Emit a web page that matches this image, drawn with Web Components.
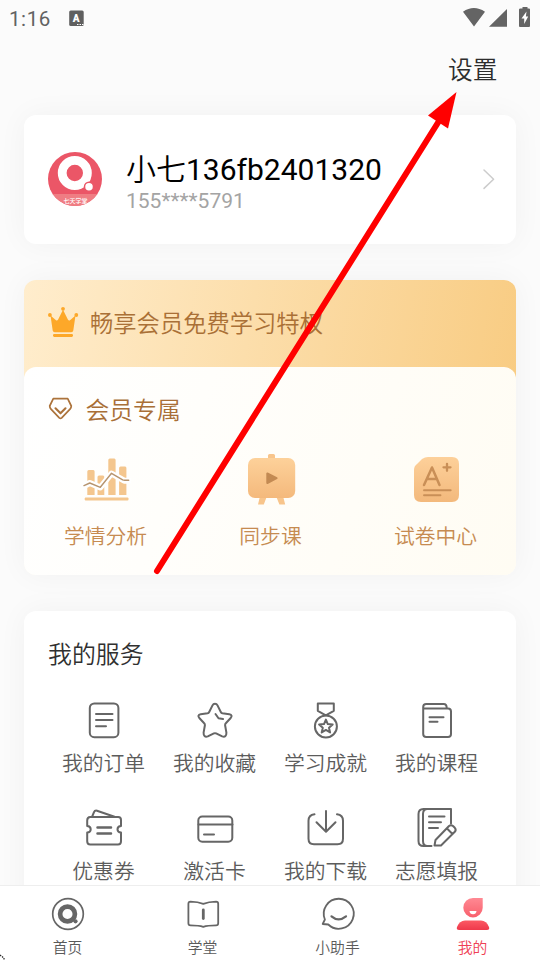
<!DOCTYPE html>
<html lang="zh-CN">
<head>
<meta charset="utf-8">
<title>我的</title>
<style>
html,body{margin:0;height:960px;overflow:hidden}
body{background:#fbfbfb;font-family:"Noto Sans CJK SC",sans-serif;font-weight:350}
</style>
</head>
<body>
<app-screen></app-screen>
<script>
const G = '#666';
const icons = {
  order: ['83.5 700 40 40', `<rect x="89.3" y="703.4" width="28.6" height="33.8" rx="4.5"/><path d="M95.5 714h16.5M95.5 720h16.5M95.5 726.3h10"/>`],
  star: ['194.5 700 40 40', `<path d="M214.5 703.8q1.7 0 2.5 1.6l3.3 6.6q.5 1 1.6 1.2l6.9 1q3.7.9 1.4 3.8l-4.9 5.3q-.8.8-.7 2l1.3 7.3q.2 5-4.2 3.8l-6.1-3q-1.1-.5-2.2 0l-6.1 3q-4.4 1.200-4.200-3.800l1.300-7.300q.1-1.200-.7-2l-4.900-5.300q-2.300-2.900 1.400-3.800l6.900-1q1.100-.2 1.600-1.200l3.300-6.600q.8-1.600 2.500-1.600z"/><path d="M215 714l3 4.300 4.500.7"/>`],
  medal: ['305.500 700 40 40', `<path d="M317.300 703.500h16v7.300l-8 4.500-8-4.500z"/><circle cx="325.400" cy="726.500" r="11"/><path stroke-width="2" d="M325.400 719.600l1.900 4.500 4.900.4-3.700 3.200 1.100 4.800-4.200-2.600-4.200 2.600 1.100-4.800-3.700-3.200 4.900-.4z"/>`],
  course: ['416.500 700 40 40', `<path d="M422.700 708.500h24.800q3 0 3 3v22.500q0 3-3 3h-21.800q-3 0-3-3v-27q0-3 3-3h17.500q3 0 3 4"/><path d="M429 717.300h14M429 721.800h8"/>`],
  coupon: ['83.5 808 40 40', `<path d="M89.700 817h28q2.800 0 2.800 3v6q-3.500.2-3.500 3.300t3.500 3.300v8.600q0 3.200-3 3.200h-27.800q-3 0-3-3.200v-8.600q3.500-.2 3.500-3.300t-3.500-3.300v-5.500q0-3.500 3-3.500zM91.500 817l2-4.800q.8-2 3-1.500l17.500 6"/><path d="M97 827.400h13.500M97 833.400h13.500" stroke-width="2.500"/>`],
  card: ['194.500 808 40 40', `<rect x="197.800" y="816.500" width="34" height="25.200" rx="4"/><path d="M198 824.500h34M203.500 834.500h10"/>`],
  download: ['305.500 808 40 40', `<path d="M314 814.300q-6 .8-6 6.500v18q0 5.500 5.500 5.500h23.500q5.500 0 5.500-5.500v-18q0-5.700-6-6.500M325.500 811v20.500M316 822.200l9.500 9.500 9.500-9.500"/>`],
  apply: ['411.500 803 50 50', `<path d="M450.500 823.500v-14.500h-27.500q-5 0-5 5v27q0 5 5 5h8M427 809q-4.500 0-4.500 5v27q0 5 4.500 5"/><path d="M428.500 816.600h15.500M428.500 822.300h12M428.500 828h9M434 845.500l1-5.500 13.500-14q2-1.500 4 0l1.800 1.800q1.700 2 0 4L440.500 845.500zM446.500 828.500l5.500 5.500"/>`],
  home: ['48 894 40 40', `<circle cx="68" cy="914" r="15.300" stroke-width="1.700"/><circle cx="67.500" cy="914" r="7.400" stroke-width="4.700"/><circle cx="75.500" cy="921.300" r="2.100" fill="#666" stroke="none"/>`],
  school: ['183 894 40 40', `<path stroke-width="1.800" d="M190.500 901.700q7.500.2 12.800 2.100 5.300-1.900 12.800-2.100 2.100 0 2.100 2.100v19.500q0 2.100-2.100 2.100-8.500 0-12.800 1.500-4.300-1.500-12.800-1.500-2.100 0-2.100-2.100v-19.500q0-2.100 2.100-2.100z"/><path d="M203.300 910v8.500" stroke-width="2.800"/>`],
  helper: ['318 894 40 40', `<path stroke-width="1.800" d="M324.900 919.500l-2.200 4.500 5.600.5A15 15 0 1 0 324.900 919.500z"/><path d="M331.500 916.300q7 6 14.500 0" stroke-width="2.200"/>`],
  mine: ['453 894 40 40', `<defs><linearGradient id="g" x1="0" y1="0" x2="0" y2="1"><stop stop-color="#ff8993"/><stop offset="1" stop-color="#f8606c"/></linearGradient><linearGradient id="h" x1="0" y1="0" x2="0" y2="1"><stop stop-color="#fb5964"/><stop offset="1" stop-color="#ef394b"/></linearGradient></defs><g stroke="none"><path fill="url(#g)" d="M473 898h9.700v9.700a9.700 9.700 0 1 1-9.700-9.700z"/><path fill="#fff" d="M469.500 911h7q-.4 3.200-3.500 3.200t-3.500-3.200z"/><path fill="url(#h)" d="M465 920.500h16q5.500 0 8 6.500 1 3-2.200 3h-27.600q-3.200 0-2.200-3 2.500-6.500 8-6.500z"/></g>`],
  analysis: ['80.5 452 50 54', `<g fill="#f4c68e" stroke="none"><path d="M86.800 471.500q0-1.500 1.500-1.500h4.500q1.300 0 1.300 1.500v23.500h-7.300zM97 477q0-1.500 1.500-1.500h4q1.300 0 1.300 1.500v18h-6.800zM107.800 460q0-1.500 1.500-1.500h4.500q1.300 0 1.300 1.500v35h-7.300zM118.600 468q0-1.500 1.500-1.500h4.500q1.300 0 1.300 1.500v27h-7.300z"/><rect x="84.200" y="497.400" width="43.800" height="3" rx="1"/></g><path d="M83.500 486l5.800-3 10.500 4.500 11.200-14 12.700 7.200h4.600" stroke="#fff" stroke-width="6"/><path d="M83.500 485.600l5.800-2.600 10.500 4.300 11.200-14 11.200 6.600 2 .4h4" stroke="#b6946f" stroke-width="1.400"/>`],
  lesson: ['245 452 50 54', `<defs><linearGradient id="g" x2="0" y2="1"><stop stop-color="#fdd19a"/><stop offset="1" stop-color="#f4b97c"/></linearGradient></defs><g stroke="none" fill="#f8c58c"><rect x="267" y="454" width="7" height="7" rx="1.500"/><path d="M259 496h7l-3.200 8.500h-5.800zM275 496h7l2.200 8.500h-5.800z"/><rect x="247" y="458" width="47.200" height="40" rx="7" fill="url(#g)"/></g><path fill="#c38a53" stroke="#c38a53" stroke-width="2" d="M266.300 473.500v9.500l9.300-4.800z"/>`],
  paper: ['410 452 50 54', `<defs><linearGradient id="g" x2="0" y2="1"><stop stop-color="#fdd09a"/><stop offset="1" stop-color="#f3b97c"/></linearGradient></defs><path fill="url(#g)" stroke="none" d="M427 457h24q7 0 7 7v31q0 7-7 7h-31q-7 0-7-7v-25q0-4 3-6l5-5q3-2 6-2z"/><g stroke="#c98f57"><path stroke-width="2.500" d="M423 485l8-17.500 7.500 17.500M426 479h10"/><path stroke-width="2.300" d="M442.500 467.300h7M446 463.800v7"/><path stroke-width="1.900" d="M423 490.200h26.700M423 495.200h16.500"/></g>`],
  crown: ['46 304 34 36', `<g fill="#fda829" stroke="none"><path d="M50.500 315.500l5.500 4.800q1.200.8 2-.5l5-10 5 10q.8 1.300 2 .5l5.500-4.800-2.200 15q-.3 1.700-2 1.700H54.700q-1.700 0-2-1.700z"/><circle cx="63" cy="308.800" r="1.900"/><circle cx="49.900" cy="315" r="1.900"/><circle cx="76.300" cy="315" r="1.900"/><rect x="53" y="333.900" width="20" height="3" rx="1.300"/></g>`],
  gem: ['46 394 30 28', `<g stroke="#ac733b" stroke-width="1.700"><path d="M53.300 398.700h14.400l3.600 7.300q0 1.700-1.300 3.200l-8.300 8.600q-1.200 1-2.400 0l-8.300-8.600q-1.300-1.500-1.300-3.200z"/><path stroke-width="2.100" d="M55.500 408.300l5 5 5-5"/></g>`],
  chevron: ['478 164 20 30', `<path stroke="#ccc" stroke-width="1.500" d="M484 170l9.600 9.200-9.600 9.200"/>`],
  avatar: ['48 152 54 54', `<defs><clipPath id="c"><circle cx="75" cy="179" r="27"/></clipPath></defs><g clip-path="url(#c)" stroke="none"><path fill="#eb5667" d="M48 152h54v54H48z"/><path fill="#ef7d83" d="M48 194h54v12H48z"/><circle cx="74.800" cy="173" r="12.600" fill="none" stroke="#fff" stroke-width="8.800"/><circle cx="89" cy="186.800" r="4.500" fill="#fff" stroke="#eb5667" stroke-width="1.500"/><text x="75.500" y="202.500" font-size="6" font-weight="500" text-anchor="middle" fill="#fff">七天学堂</text></g>`],
  keyboard: ['70 9 17 18', `<rect x="71.200" y="10.500" width="14.500" height="15.500" rx="1.500" fill="#5f5f5f" stroke="none"/><text x="78.500" y="21.500" text-anchor="middle" font-family="Roboto" font-weight="900" font-size="10" fill="#fff" stroke="none">A</text><path stroke="#fff" stroke-width="1.200" stroke-linecap="butt" stroke-dasharray="1.500 1" d="M79 24.500h6.500"/>`],
  signals: ['460 4 74 26', `<g fill="#646464" stroke="none"><path d="M463 11.800q10.800-7.500 22 0L474 26.500zM507 9v17.800H489zM520.500 8.500h2V7h5v1.500h1.500q1 0 1 1v16.500q0 1-1 1h-9q-1 0-1-1v-16.500q0-1 1.500-1z"/><path fill="#fff" d="M526.500 11.500l-5 7h2.700v5.500l4-7.500h-2.300z"/></g>`]
};
function define(name, css, html) {
  customElements.define(name, class extends HTMLElement {
    constructor() {
      super();
      this.attachShadow({mode:'open'}).innerHTML = `<style>:host{display:block;box-sizing:border-box}*{box-sizing:border-box}${css}</style>` + (typeof html === 'function' ? html(this) : html);
    }
  });
}
customElements.define('ui-icon', class extends HTMLElement {
  connectedCallback() {
    if (this.shadowRoot) return;
    const [box, body] = icons[this.getAttribute('name')], [, , w, h] = box.split(' ');
    this.attachShadow({mode:'open'}).innerHTML = `<style>:host{display:block;flex:none;width:${w}px;height:${h}px}svg{display:block}</style><svg width="${w}" height="${h}" viewBox="${box}" fill="none" stroke="${G}" stroke-width="2" stroke-linecap="round" stroke-linejoin="round">${body}</svg>`;
  }
});
define('status-bar', ':host{display:flex;height:36px;padding:0 6px 0 9px;font:400 20.500px/38px Roboto,sans-serif;letter-spacing:.6px;color:#626262}.k{margin:9px auto 0 17px}.s{margin-top:4px}',
  '<span>1:16</span><ui-icon class="k" name="keyboard"></ui-icon><ui-icon class="s" name="signals"></ui-icon>');
define('page-header', ':host{height:79px;padding:14px 42.500px 0 0;text-align:right;font-size:24.700px;line-height:37px;color:#2d2d2d}', '<slot></slot>');
define('profile-card', ':host{display:flex;align-items:center;height:129px;padding:0 18px 2px 24px;background:#fff;border-radius:12px;box-shadow:0 0 30px #0000000b;font-family:inherit}.t{flex:1;margin:9px 0 0 24px}.n{font-family:Roboto,"Noto Sans CJK SC",sans-serif;font-size:30px;line-height:34px;color:#000;white-space:nowrap}.p{font:400 21px/26px Roboto,sans-serif;color:#a4a4a4;margin-top:1px}',
  '<ui-icon name="avatar"></ui-icon><div class="t"><div class="n"><slot></slot></div><div class="p"><slot name="phone"></slot></div></div><ui-icon name="chevron"></ui-icon>');
define('member-item', ':host{display:flex;flex:none;flex-direction:column;align-items:center;width:165px;color:#c68b51;font-size:20.800px;line-height:30px}ui-icon{margin-bottom:14px}', e => `<ui-icon name="${e.getAttribute('icon')}"></ui-icon><span><slot></slot></span>`);
define('member-card', ':host{height:295px;margin-top:36px;border-radius:12px;background:linear-gradient(#0000 110px,#fffdf6 110px),linear-gradient(100deg,#ffedcd,#f8ca7e);box-shadow:0 0 30px #0000000b;overflow:hidden}.b{display:flex;align-items:center;height:87px;padding:0 22px 3px;font-size:23.300px;color:#aa7036}.b ui-icon{margin-right:10px}.c{height:208px;border-radius:12px;background:linear-gradient(110deg,#fff,#fffcf3)}.h{display:flex;align-items:center;height:85px;padding:0 0 2px 22px;font-size:23.800px;color:#a96f37}.h ui-icon{margin:-1px 9.500px 0 0}.r{display:flex;margin-left:-1px}',
  '<div class="b"><ui-icon name="crown"></ui-icon><slot name="banner"></slot></div><div class="c"><div class="h"><ui-icon name="gem"></ui-icon><slot name="title"></slot></div><div class="r"><slot></slot></div></div>');
define('service-item', ':host{display:flex;flex-direction:column;align-items:center;height:108px;font-size:20.800px;line-height:31px;color:#5c5c5c}.i{width:50px;height:40px;margin:0 0 7px;display:flex;align-items:center;justify-content:center}span{white-space:nowrap}', e => `<div class="i"><ui-icon name="${e.getAttribute('icon')}"></ui-icon></div><span><slot></slot></span>`);
define('service-card', ':host{height:320px;margin-top:36px;padding:24px 24px 0;background:#fff;border-radius:12px;box-shadow:0 0 30px #0000000b}.h{font-size:23.900px;line-height:36px;color:#303030;margin-bottom:29px}.g{display:grid;grid-template-columns:repeat(4,111px)}', '<div class="h"><slot name="title"></slot></div><div class="g"><slot></slot></div>');
define('tab-item', ':host{display:flex;flex-direction:column;align-items:center;flex:1;padding-top:8px;font-size:14.800px;line-height:22px;color:#5a5a5a}:host([active]){color:#ef4054}ui-icon{margin-bottom:2px}', e => `<ui-icon name="${e.getAttribute('icon')}"></ui-icon><span><slot></slot></span>`);
define('tab-bar', ':host{display:flex;height:75px;flex:none;background:#fff;border-top:1px solid #eee}', '<slot></slot>');
define('pointer-arrow', ':host{position:absolute;inset:0;pointer-events:none}svg{display:block}', '<svg width="540" height="960"><path d="M157 571L439 121" stroke="#f00" stroke-width="6" stroke-linecap="round"/><path d="M456.500 92L448 128.500 428 115.500z" fill="#f00"/><path d="M0 955l4 3v2" fill="none" stroke="#222" stroke-width="1.200" stroke-dasharray="1.500 1"/></svg>');
define('app-screen', ':host{position:relative;display:flex;flex-direction:column;width:540px;height:960px;overflow:hidden}main{flex:1;min-height:0;overflow:hidden;padding:0 24px}page-header{margin-right:-24px}status-bar{margin:0 -24px}.d{font-weight:400}', `
<main><status-bar></status-bar><page-header>设置</page-header>
<profile-card>小七<span class="d">136fb2401320</span><span slot="phone">155****5791</span></profile-card>
<member-card><span slot="banner">畅享会员免费学习特权</span><span slot="title">会员专属</span>
<member-item icon="analysis">学情分析</member-item><member-item icon="lesson">同步课</member-item><member-item icon="paper">试卷中心</member-item></member-card>
<service-card><span slot="title">我的服务</span>
<service-item icon="order">我的订单</service-item><service-item icon="star">我的收藏</service-item><service-item icon="medal">学习成就</service-item><service-item icon="course">我的课程</service-item>
<service-item icon="coupon">优惠券</service-item><service-item icon="card">激活卡</service-item><service-item icon="download">我的下载</service-item><service-item icon="apply">志愿填报</service-item></service-card></main>
<tab-bar><tab-item icon="home">首页</tab-item><tab-item icon="school">学堂</tab-item><tab-item icon="helper">小助手</tab-item><tab-item icon="mine" active>我的</tab-item></tab-bar>
<pointer-arrow></pointer-arrow>`);
</script>
</body>
</html>
